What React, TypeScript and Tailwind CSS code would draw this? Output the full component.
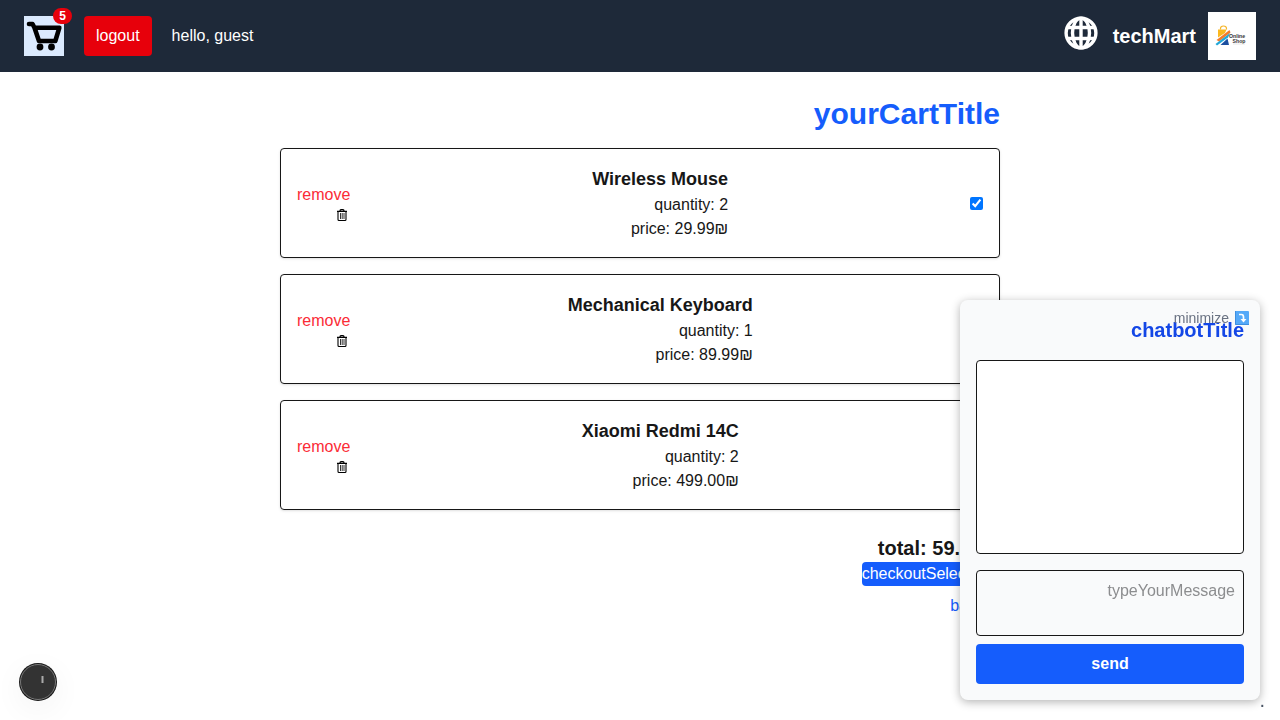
import { useState } from "react";

type Item = { id: number; name: string; quantity: number; price: string };

const items: Item[] = [
  { id: 1, name: "Wireless Mouse", quantity: 2, price: "29.99" },
  { id: 2, name: "Mechanical Keyboard", quantity: 1, price: "89.99" },
  { id: 3, name: "Xiaomi Redmi 14C", quantity: 2, price: "499.00" },
];

function CartIcon() {
  return (
    <svg viewBox="0 0 40 40" className="h-10 w-10 bg-blue-100" aria-hidden="true">
      <path d="M5 8H8.500L10.500 11.800L15 25H31.300L35.300 11.800H10.500" fill="none" stroke="#000" strokeWidth="4.600" strokeLinecap="round" strokeLinejoin="round" />
      <circle cx="16" cy="31" r="3.400" />
      <circle cx="27.500" cy="31" r="3.400" />
    </svg>
  );
}

function GlobeIcon() {
  return (
    <svg viewBox="0 0 34 34" className="h-[34px] w-[34px]" fill="none" stroke="#fff" strokeWidth="3.400" aria-hidden="true">
      <circle cx="17" cy="17" r="14.900" />
      <ellipse cx="17" cy="17" rx="8.500" ry="14.900" />
      <path d="M17 2V32M3.500 11.500H30.500M3.500 22.500H30.500" />
    </svg>
  );
}

function ShopLogo() {
  return (
    <svg viewBox="0 0 48 48" className="h-12 w-12 bg-white" role="img" aria-label="Online Shop">
      <path d="M12.500 17.500V16.500a3 2.500 0 0 1 6 0v1" fill="none" stroke="#f5b52a" strokeWidth="1.200" />
      <path d="M10 17.500h8.500L17 21 10 25.500Z" fill="#fbb81f" />
      <path d="M8.500 28 21.500 18 22.500 20.500 11 29.500Z" fill="#f47b2a" />
      <path d="M7.500 32 22 21 20 25.500 9 33.500Z" fill="#22a7d8" />
      <path d="M12.500 33 19.500 26.500 21 33Z" fill="#1c4fa0" />
      <g fontFamily="Liberation Sans, sans-serif" fontWeight="700" fontSize="5.200" fill="#333">
        <text x="21" y="25.500" direction="ltr">Online</text>
        <text x="24.500" y="30.500" direction="ltr">Shop</text>
      </g>
      <path d="M25 32H37" stroke="#ddd" strokeWidth="0.700" />
    </svg>
  );
}

function TrashIcon() {
  return (
    <svg viewBox="0 0 16 16" className="h-4 w-4" fill="none" stroke="#000" aria-hidden="true">
      <path d="M3 4.300H13M6 3.800Q6 2.700 7 2.700H9Q10 2.700 10 3.800" strokeWidth="1.200" />
      <path d="M4 4V12.500Q4 13.500 5 13.500H11Q12 13.500 12 12.500V4" strokeWidth="1.100" />
      <path d="M6.500 6V12M8.200 6V12M10 6V12" strokeWidth="0.800" />
    </svg>
  );
}

function CurveDownIcon() {
  return (
    <svg viewBox="0 0 14 14" className="h-3.5 w-3.5" aria-hidden="true">
      <rect width="14" height="14" rx="1" fill="#55a9f8" />
      <path d="M0.500 0V13.500H14" fill="none" stroke="#3d8fe0" />
      <path d="M4 3.500H6.500Q8.500 3.500 8.500 6V8.500" fill="none" stroke="#fff" strokeWidth="1.700" />
      <path d="M5.500 8H11.500L8.500 11.500Z" fill="#fff" />
    </svg>
  );
}

function CartRow({ item, checked, onToggle }: { item: Item; checked: boolean; onToggle: () => void }) {
  return (
    <li className="flex items-center justify-between rounded border border-[#171717] p-4 shadow-sm">
      <input
        type="checkbox"
        aria-label={item.name}
        checked={checked}
        onChange={onToggle}
        className="h-[13px] w-[13px]"
      />
      <div>
        <h2 className="text-lg font-bold">{item.name}</h2>
        <p>quantity: {item.quantity}</p>
        <p>price: {item.price}₪</p>
      </div>
      <button type="button" className="flex flex-col items-start text-[#fb2c36]">
        remove
        <TrashIcon />
      </button>
    </li>
  );
}

export default function App() {
  const [selected, setSelected] = useState<number[]>([1]);
  const toggle = (id: number) =>
    setSelected((s) => (s.includes(id) ? s.filter((x) => x !== id) : [...s, id]));

  return (
    <div dir="rtl" className="min-h-screen bg-white font-['Liberation_Sans',Arial,sans-serif] text-[#171717]">
      <header className="flex items-center justify-between bg-gray-800 px-6 py-3 text-white">
        <div className="flex items-center gap-3">
          <ShopLogo />
          <span className="text-xl font-bold">techMart</span>
          <button type="button" aria-label="language" className="mb-1.5 mr-[3px]">
            <GlobeIcon />
          </button>
        </div>
        <div className="flex items-center gap-5">
          <span>hello, guest</span>
          <button type="button" className="rounded bg-[#e7000b] px-3 py-2">logout</button>
          <a href="#cart" aria-label="cart" className="relative block">
            <CartIcon />
            <span className="absolute -top-2 -right-2 rounded-full bg-[#e7000b] px-1.5 text-xs font-bold">5</span>
          </a>
        </div>
      </header>

      <main id="cart" className="mx-auto max-w-3xl p-6">
        <h1 className="mb-4 text-3xl font-bold text-[#155dfc]">yourCartTitle</h1>
        <ul className="flex flex-col gap-4">
          {items.map((item) => (
            <CartRow key={item.id} item={item} checked={selected.includes(item.id)} onToggle={() => toggle(item.id)} />
          ))}
        </ul>
        <div className="mt-6 flex flex-col items-start">
          <p className="text-xl font-bold">total: 59.98₪</p>
          <button type="button" className="rounded bg-[#155dfc] pr-3 text-white">checkoutSelected</button>
          <a href="#home" className="mt-2 pr-4 text-[#155dfc]">back</a>
        </div>
      </main>

      <section aria-label="chatbotTitle" className="fixed right-5 bottom-5 flex h-[400px] w-[300px] flex-col rounded-lg bg-gray-50 p-4 shadow-[0_2px_10px_rgba(0,0,0,0.3)]">
        <h2 className="mb-4 text-xl font-bold text-[#1447e6]">chatbotTitle</h2>
        <button type="button" className="absolute top-2 right-[11px] flex flex-row-reverse items-center gap-1.5 text-sm text-gray-500">
          minimize
          <CurveDownIcon />
        </button>
        <div role="log" className="mb-4 grow rounded border border-[#171717] bg-white" />
        <textarea
          aria-label="typeYourMessage"
          placeholder="typeYourMessage"
          className="mb-2 block h-[66px] w-full resize-none rounded border border-[#171717] p-2 placeholder:text-[#8c8d8f]"
        />
        <button type="button" className="rounded bg-[#155dfc] py-2 font-bold text-white">send</button>
      </section>

      <button
        type="button"
        aria-label="tools"
        className="fixed bottom-5 left-5 flex h-9 w-9 items-center justify-center rounded-full border border-[#777] bg-[#333] shadow-[0_0_0_1px_#171717,0_8px_32px_rgba(0,0,0,0.06)]"
      >
        <svg viewBox="0 0 36 36" className="h-9 w-9 shrink-0" aria-hidden="true">
          <path d="M22.500 12V19" stroke="#aaa" strokeWidth="2" />
        </svg>
      </button>
      <span className="fixed right-[15px] bottom-3 text-xl leading-4 text-gray-600">.</span>
    </div>
  );
}
